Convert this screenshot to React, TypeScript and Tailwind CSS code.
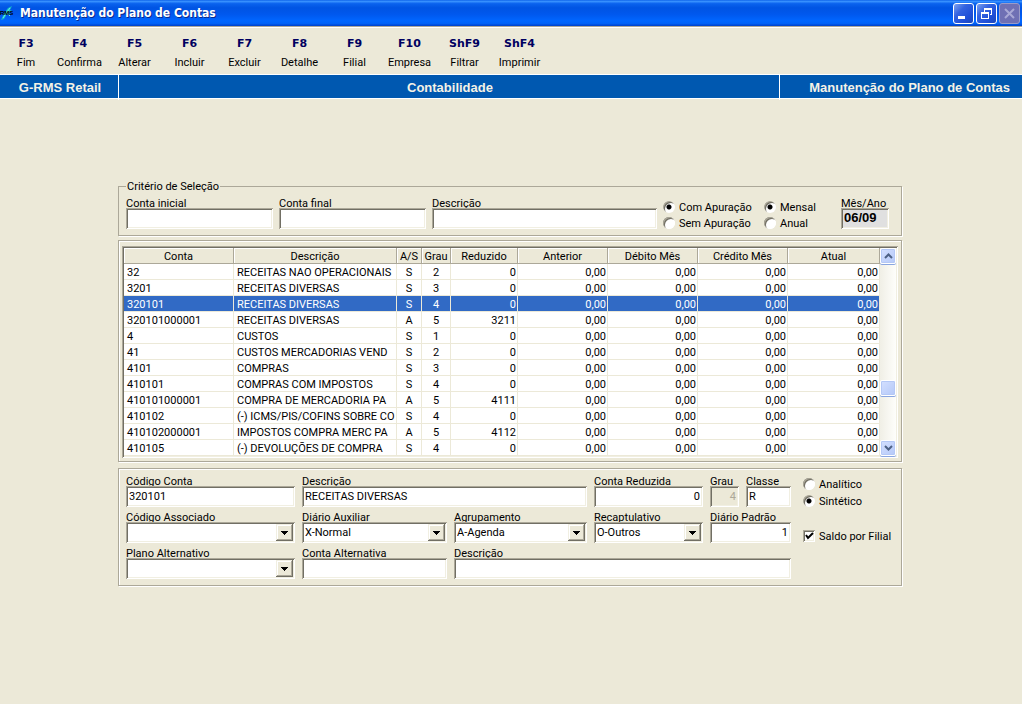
import { useState } from "react";
import type { ReactNode } from "react";
import clsx from "clsx";

const sunken =
  "shadow-[inset_1px_1px_0_#aca899,inset_-1px_-1px_0_#fff,inset_2px_2px_0_#716f64,inset_-2px_-2px_0_#f1efe2]";
const etched = "border border-[#aca899] shadow-[1px_1px_0_#fff,inset_1px_1px_0_#fff]";

const actions = [
  { key: "F3", label: "Fim" },
  { key: "F4", label: "Confirma" },
  { key: "F5", label: "Alterar" },
  { key: "F6", label: "Incluir" },
  { key: "F7", label: "Excluir" },
  { key: "F8", label: "Detalhe" },
  { key: "F9", label: "Filial" },
  { key: "F10", label: "Empresa" },
  { key: "ShF9", label: "Filtrar" },
  { key: "ShF4", label: "Imprimir" },
];

const columns = [
  { label: "Conta", width: "w-[110px]" },
  { label: "Descrição", width: "" },
  { label: "A/S", width: "w-[25px]" },
  { label: "Grau", width: "w-[29px]" },
  { label: "Reduzido", width: "w-[67px]" },
  { label: "Anterior", width: "w-[90px]" },
  { label: "Débito Mês", width: "w-[90px]" },
  { label: "Crédito Mês", width: "w-[90px]" },
  { label: "Atual", width: "w-[92px]" },
];

const accounts = [
  { conta: "32", descricao: "RECEITAS NAO OPERACIONAIS", tipo: "S", grau: 2, reduzido: 0 },
  { conta: "3201", descricao: "RECEITAS DIVERSAS", tipo: "S", grau: 3, reduzido: 0 },
  { conta: "320101", descricao: "RECEITAS DIVERSAS", tipo: "S", grau: 4, reduzido: 0 },
  { conta: "320101000001", descricao: "RECEITAS DIVERSAS", tipo: "A", grau: 5, reduzido: 3211 },
  { conta: "4", descricao: "CUSTOS", tipo: "S", grau: 1, reduzido: 0 },
  { conta: "41", descricao: "CUSTOS MERCADORIAS VEND", tipo: "S", grau: 2, reduzido: 0 },
  { conta: "4101", descricao: "COMPRAS", tipo: "S", grau: 3, reduzido: 0 },
  { conta: "410101", descricao: "COMPRAS COM IMPOSTOS", tipo: "S", grau: 4, reduzido: 0 },
  { conta: "410101000001", descricao: "COMPRA DE MERCADORIA PA", tipo: "A", grau: 5, reduzido: 4111 },
  { conta: "410102", descricao: "(-) ICMS/PIS/COFINS SOBRE CO", tipo: "S", grau: 4, reduzido: 0 },
  { conta: "410102000001", descricao: "IMPOSTOS COMPRA MERC PA", tipo: "A", grau: 5, reduzido: 4112 },
  { conta: "410105", descricao: "(-) DEVOLUÇÕES DE COMPRA", tipo: "S", grau: 4, reduzido: 0 },
];

interface FieldProps {
  id: string;
  label: string;
  value?: string;
  className?: string;
  inputClass?: string;
  background?: string;
  disabled?: boolean;
}

function Field({ id, label, value = "", className, inputClass, background = "bg-white", disabled }: FieldProps) {
  return (
    <div className={clsx("flex flex-col min-w-0", className)}>
      <label htmlFor={id} className="h-3 leading-[15px] whitespace-nowrap">
        {label}
      </label>
      <input
        id={id}
        defaultValue={value}
        disabled={disabled}
        className={clsx(
          "h-[21px] w-full px-[3px] outline-none disabled:text-[#aca899]",
          background,
          sunken,
          inputClass
        )}
      />
    </div>
  );
}

function SelectField({ id, label, options, className }: { id: string; label: string; options: string[]; className?: string }) {
  return (
    <div className={clsx("flex flex-col min-w-0", className)}>
      <label htmlFor={id} className="h-3 leading-[15px] whitespace-nowrap">
        {label}
      </label>
      <div className="relative">
        <select
          id={id}
          className={clsx("block h-[21px] w-full appearance-none bg-white pt-0.5 pr-5 pl-[3px] outline-none", sunken)}
        >
          {options.map((o) => (
            <option key={o}>{o}</option>
          ))}
        </select>
        <span className="pointer-events-none absolute top-0.5 right-0.5 flex h-[17px] w-[17px] items-center justify-center bg-[#ece9d8] shadow-[inset_-1px_-1px_0_#716f64,inset_1px_1px_0_#f1efe2,inset_-2px_-2px_0_#aca899,inset_2px_2px_0_#fff]">
          <svg width="7" height="4" viewBox="0 0 7 4" shapeRendering="crispEdges">
            <path d="M0 0h7v1H6v1H5v1H4v1H3V3H2V2H1V1H0z" />
          </svg>
        </span>
      </div>
    </div>
  );
}

function Radio({ name, label, checked = false }: { name: string; label: string; checked?: boolean }) {
  return (
    <label className="flex h-4 items-center gap-1 whitespace-nowrap">
      <input
        type="radio"
        name={name}
        defaultChecked={checked}
        className="h-3 w-3 appearance-none rounded-full bg-white shadow-[inset_1px_1px_0_#aca899,inset_-1px_-1px_0_#fff,inset_2px_2px_0_#716f64] checked:bg-[radial-gradient(circle,#000_2px,#fff_3px)]"
      />
      <span className="pt-[3px]">{label}</span>
    </label>
  );
}

function WindowButton({ label, disabled, children }: { label: string; disabled?: boolean; children: ReactNode }) {
  return (
    <button
      aria-label={label}
      disabled={disabled}
      className={clsx(
        "h-[21px] w-[21px] rounded-[3px] border",
        disabled
          ? "border-[#9a9bc8] bg-[#6f70b4]"
          : "border-white bg-[linear-gradient(135deg,#7da2f0_0%,#3463e0_35%,#2050d8_70%,#1b46b8_100%)]"
      )}
    >
      <svg width="19" height="19" viewBox="0 0 19 19" fill="none" shapeRendering="crispEdges">
        {children}
      </svg>
    </button>
  );
}

function TitleBar() {
  return (
    <header className="flex h-[26px] items-center justify-between bg-[linear-gradient(#0a5fe8_0%,#3a93ff_5%,#0a62ee_14%,#0054e3_30%,#0058ee_55%,#0066ff_80%,#0062f8_90%,#0040c8_100%)] pr-0.5">
      <div className="flex items-center gap-1">
        <svg width="16" height="16" viewBox="0 0 16 16">
          <path d="m1 15 4-8 3-4 4-2-2 4 2 1-3 2 1 3-3-2-3 5z" fill="#17b8c8" />
          <path d="m3 13 4-6 3-4M7 8l3 3" stroke="#5ff4e4" fill="none" />
          <text x="0" y="10" fontSize="6" fontWeight="700" fontFamily="Liberation Sans, sans-serif" fill="#000">
            RMS
          </text>
        </svg>
        <h1 className="font-['DejaVu_Sans_Condensed','DejaVu_Sans',sans-serif] text-[12px] leading-4 font-bold text-white [text-shadow:1px_1px_0_#0a2a8c]">
          Manutenção do Plano de Contas
        </h1>
      </div>
      <div className="flex gap-0.5">
        <WindowButton label="Minimizar">
          <path d="M4 12h7v3H4z" fill="#fff" />
        </WindowButton>
        <WindowButton label="Restaurar">
          <path d="M7 4h8v7h-2v-1h1V6H8v2H7zM4 8h8v7H4zm1 2v4h6v-4z" fill="#fff" fillRule="evenodd" />
        </WindowButton>
        <WindowButton label="Fechar" disabled>
          <path d="m5 5 9 9m0-9-9 9" stroke="#a9a9d6" strokeWidth="2" shapeRendering="auto" />
        </WindowButton>
      </div>
    </header>
  );
}

function ScrollBar() {
  const face =
    "h-4 w-full shrink-0 rounded-[2px] border border-white bg-[linear-gradient(135deg,#d4e0ff,#b4c8f8)] shadow-[inset_0_0_0_1px_#b4c8f6,0_1px_0_#8aa6e0]";
  return (
    <div className="flex w-4 shrink-0 flex-col bg-[linear-gradient(90deg,#f0efe6,#fefefb)]">
      <button aria-label="Rolar para cima" className={clsx(face, "flex items-center justify-center")}>
        <svg width="9" height="6" viewBox="0 0 9 6" fill="none" stroke="#4d6185" strokeWidth="2">
          <path d="m1 5 3.500-3.500L8 5" />
        </svg>
      </button>
      <div className="grow-[117]" />
      <div className={face} />
      <div className="grow-[44]" />
      <button aria-label="Rolar para baixo" className={clsx(face, "flex items-center justify-center")}>
        <svg width="9" height="6" viewBox="0 0 9 6" fill="none" stroke="#4d6185" strokeWidth="2">
          <path d="m1 1 3.500 3.500L8 1" />
        </svg>
      </button>
    </div>
  );
}

function AccountsTable() {
  const [selected, setSelected] = useState("320101");

  return (
    <section className={clsx("mt-1 px-[3px] pt-[5px] pb-[3px]", etched)}>
      <div className={clsx("flex bg-white p-0.5", sunken)}>
        <div className="min-w-0 flex-1">
          <table className="w-full table-fixed border-separate border-spacing-0">
            <thead>
              <tr>
                {columns.map((c) => (
                  <th
                    key={c.label}
                    className={clsx(
                      "h-4 overflow-hidden border-r border-b border-[#aca899] bg-[#ece9d8] px-0 pt-0.5 pb-0 text-center leading-[13px] font-normal whitespace-nowrap shadow-[inset_1px_1px_0_#fff]",
                      c.width
                    )}
                  >
                    {c.label}
                  </th>
                ))}
              </tr>
            </thead>
            <tbody>
              {accounts.map((a) => (
                <tr
                  key={a.conta}
                  onClick={() => setSelected(a.conta)}
                  className={clsx(
                    "*:h-4 *:overflow-hidden *:border-r *:border-b *:border-[#ece9d8] *:pt-0.5 *:pb-0 *:leading-[13px] *:whitespace-nowrap",
                    a.conta === selected && "bg-[#316ac5] text-white"
                  )}
                >
                  <td className="px-[3px]">{a.conta}</td>
                  <td className="pr-0.5 pl-[3px]">{a.descricao}</td>
                  <td className="px-0 text-center">{a.tipo}</td>
                  <td className="px-0 text-center">{a.grau}</td>
                  <td className="px-px text-right">{a.reduzido}</td>
                  <td className="px-px text-right">0,00</td>
                  <td className="px-px text-right">0,00</td>
                  <td className="px-px text-right">0,00</td>
                  <td className="px-px text-right">0,00</td>
                </tr>
              ))}
            </tbody>
          </table>
        </div>
        <ScrollBar />
      </div>
    </section>
  );
}

export default function App() {
  return (
    <div className="min-h-screen bg-[#ece9d8] font-[Roboto,'Liberation_Sans',sans-serif] text-[11px] text-black">
      <TitleBar />

      <nav className="flex h-12 items-start border-t border-[#aca899] pt-[9px] shadow-[inset_0_1px_0_#fff]">
        {actions.map((a) => (
          <button key={a.key} className="flex w-[55px] flex-col items-center gap-1 leading-[15px] first:w-[52px]">
            <span className="font-['DejaVu_Sans',sans-serif] text-[11px] font-bold text-[#000060]">{a.key}</span>
            <span>{a.label}</span>
          </button>
        ))}
      </nav>

      <div className="grid h-[25px] grid-cols-[118px_1fr_242px] border-y border-white bg-[#0058b0] font-['Liberation_Sans',sans-serif] text-[13px] leading-[25px] font-bold text-[#f4f2e6]">
        <span className="pl-0.5 text-center">G-RMS Retail</span>
        <span className="border-x border-white pl-0.5 text-center">Contabilidade</span>
        <span className="pr-3 text-right">Manutenção do Plano de Contas</span>
      </div>

      <main className="pt-[81px] pr-0.5">
        <div className="mx-auto max-w-[784px]">
          <fieldset className="border border-[#aca899] pr-3 pb-1 pl-[7px] shadow-[1px_1px_0_#fff]">
            <legend className="bg-[#ece9d8] px-px leading-[13px]">Critério de Seleção</legend>
            <div className="flex gap-1.5 pt-[3px]">
              <Field id="conta-inicial" label="Conta inicial" className="w-[147px]" />
              <Field id="conta-final" label="Conta final" className="w-[147px]" />
              <Field id="filtro-descricao" label="Descrição" className="flex-1" />
              <div className="w-[95px] pt-[3px]">
                <Radio name="apuracao" label="Com Apuração" checked />
                <Radio name="apuracao" label="Sem Apuração" />
              </div>
              <div className="w-[71px] pt-[3px]">
                <Radio name="periodo" label="Mensal" checked />
                <Radio name="periodo" label="Anual" />
              </div>
              <Field
                id="mes-ano"
                label="Mês/Ano"
                value="06/09"
                className="w-12"
                background="bg-[#e0e0e0]"
                inputClass="pb-0.5 font-['Liberation_Sans',sans-serif] text-[13px] font-bold"
              />
            </div>
          </fieldset>

          <AccountsTable />

          <section className={clsx("mt-1.5 flex gap-3 pt-[5px] pb-1.5 pl-[7px]", etched)}>
            <div className="grid flex-1 grid-cols-[169px_145px_1fr_109px_29px_45px] gap-x-[7px] gap-y-[3px]">
              <Field id="codigo-conta" label="Código Conta" value="320101" />
              <Field id="descricao" label="Descrição" value="RECEITAS DIVERSAS" className="col-span-2" />
              <Field id="conta-reduzida" label="Conta Reduzida" value="0" inputClass="text-right" />
              <Field id="grau" label="Grau" value="4" inputClass="text-right" background="bg-[#ece9d8]" disabled />
              <Field id="classe" label="Classe" value="R" />

              <SelectField id="codigo-associado" label="Código Associado" options={[""]} />
              <SelectField id="diario-auxiliar" label="Diário Auxiliar" options={["X-Normal"]} />
              <SelectField id="agrupamento" label="Agrupamento" options={["A-Agenda"]} />
              <SelectField id="recaptulativo" label="Recaptulativo" options={["O-Outros"]} />
              <Field
                id="diario-padrao"
                label="Diário Padrão"
                value="1"
                className="col-span-2"
                inputClass="text-right"
              />

              <SelectField id="plano-alternativo" label="Plano Alternativo" options={[""]} />
              <Field id="conta-alternativa" label="Conta Alternativa" />
              <Field id="descricao-alternativa" label="Descrição" className="col-span-4" />
            </div>

            <div className="flex w-[98px] flex-col gap-px pt-0.5">
              <Radio name="tipo" label="Analítico" />
              <Radio name="tipo" label="Sintético" checked />
              <label className="mt-[18px] flex h-4 items-center gap-1 whitespace-nowrap">
                <span className="relative flex">
                  <input
                    type="checkbox"
                    defaultChecked
                    className={clsx("peer h-3 w-3 appearance-none bg-white", sunken)}
                  />
                  <svg
                    className="pointer-events-none absolute top-0 left-0 hidden peer-checked:block"
                    width="12"
                    height="12"
                    viewBox="0 0 12 12"
                    fill="none"
                  >
                    <path d="m3 5 2 3 5-5" stroke="#000" strokeWidth="2" />
                  </svg>
                </span>
                <span className="pt-[3px]">Saldo por Filial</span>
              </label>
            </div>
          </section>
        </div>
      </main>
    </div>
  );
}
